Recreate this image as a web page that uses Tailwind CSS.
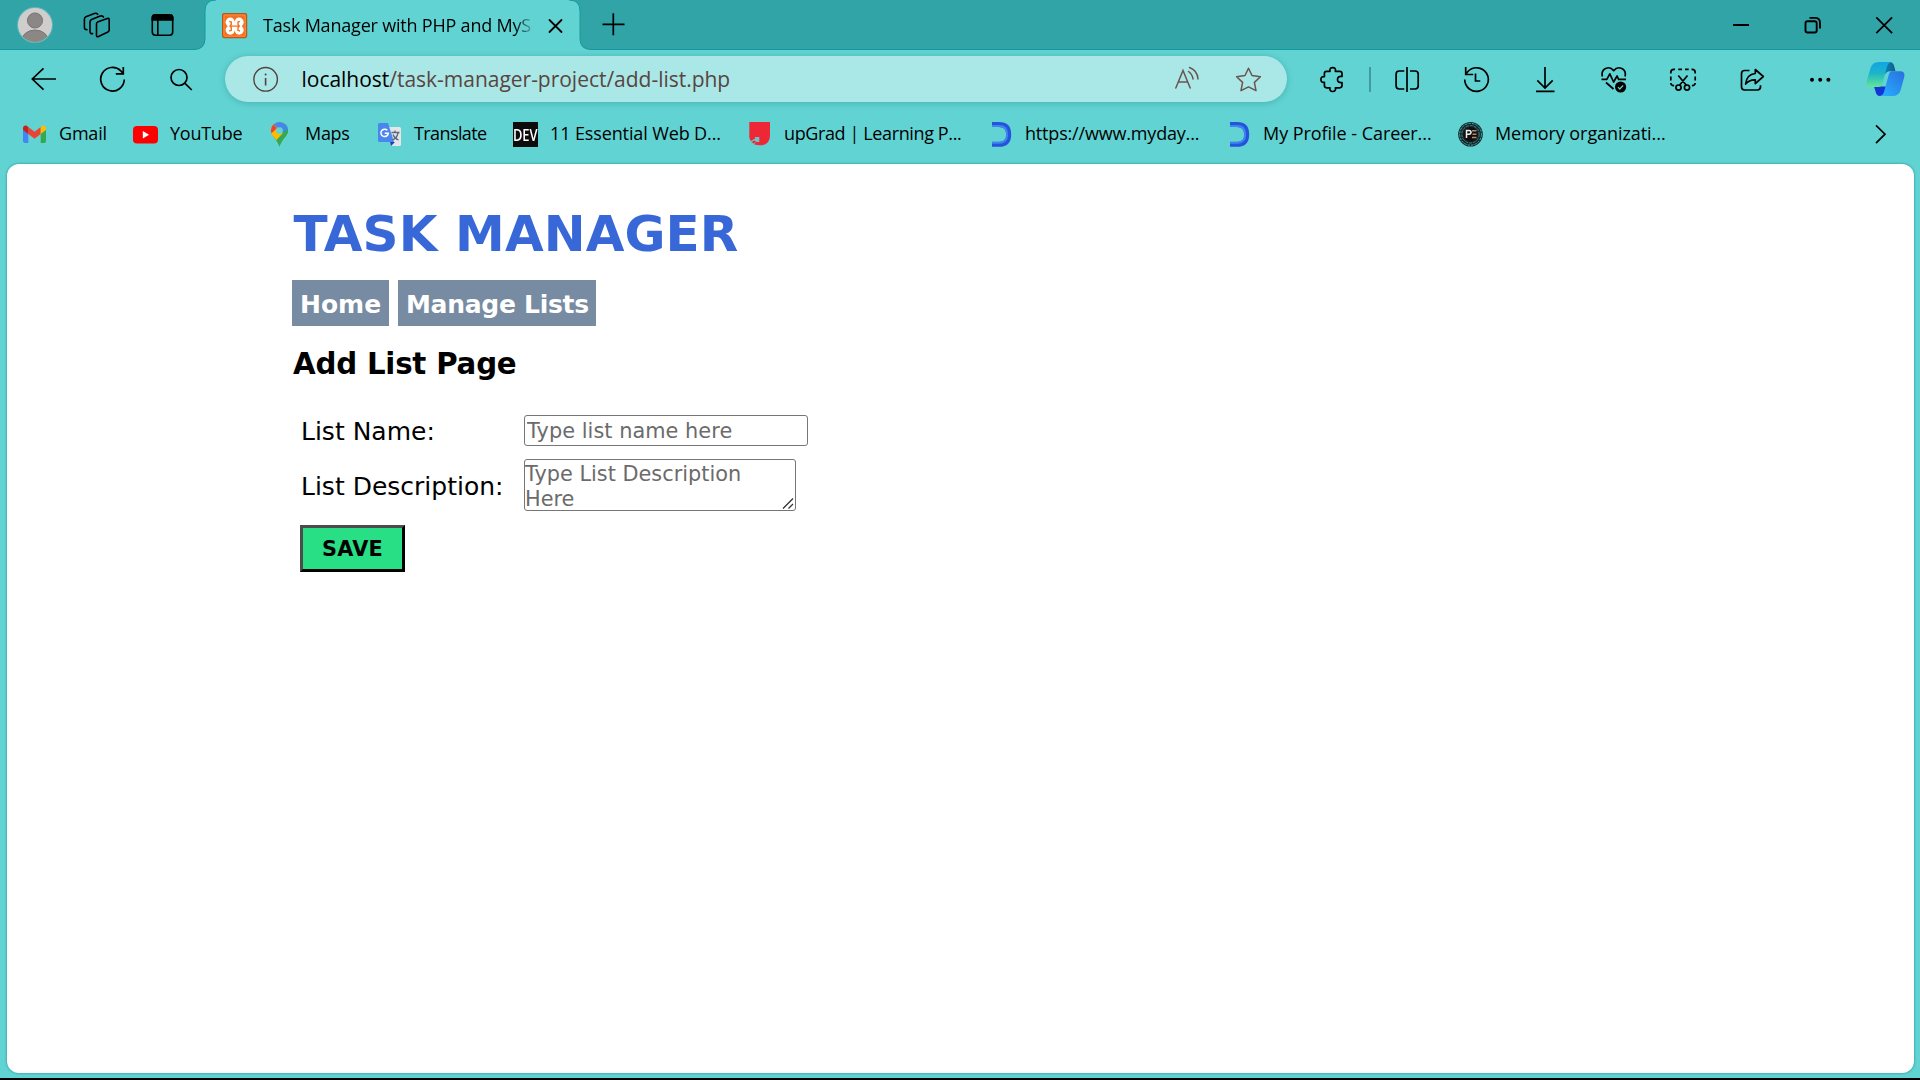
<!DOCTYPE html>
<html lang="en">
<head>
<meta charset="utf-8">
<title>Task Manager with PHP and MySQL</title>
<script src="https://cdn.jsdelivr.net/npm/@tailwindcss/browser@4"></script>
</head>
<body class="flex h-[1080px] w-[1920px] flex-col overflow-hidden bg-[#62d3d3] font-['Open_Sans',sans-serif] text-black">

<!-- Tab strip -->
<header class="flex h-[50px] shrink-0 items-start border-b border-[#149a9c] bg-[#31a4a8]">
  <svg class="ml-4 h-[50px] w-[38px]" viewBox="16 0 38 50">
    <defs><clipPath id="av"><circle cx="35" cy="25" r="17"/></clipPath></defs>
    <circle cx="35" cy="25" r="18" fill="#5fb8b8"/><circle cx="35" cy="25" r="17" fill="#d0cecd"/>
    <g clip-path="url(#av)" fill="#8b8785" stroke="#6d6a68" stroke-width=".8"><circle cx="35" cy="20.5" r="7.6"/><ellipse cx="35" cy="41" rx="13.5" ry="11"/></g>
  </svg>
  <svg class="ml-7 h-[50px] w-[30px]" viewBox="82 0 30 50" fill="none" stroke="#000" stroke-width="1.6" stroke-linejoin="round" stroke-linecap="round">
    <path d="M97.5 22.1l9.8-3.6q1.9-.6 1.9 1.3v10q0 1.5-1.3 2.2l-9.4 4.5q-2 .8-2-1.3V24q0-1.4 1-1.9z"/>
    <path d="M92.6 33.6q-2.6.3-2.6-2V22q0-1.8 1.6-2.5l8.6-3.4q2.3-.8 3.3.9"/>
    <path d="M87 29.8q-2.6-.2-2.6-2.6V19q0-1.700 1.500-2.300l8.500-3.200q2.200-.7 3.200.8"/>
  </svg>
  <svg class="ml-9 h-[50px] w-[28px]" viewBox="148 0 28 50" fill="none" stroke="#000" stroke-width="1.6">
    <rect x="152.3" y="14.800" width="20.400" height="20.400" rx="3.200"/><path d="M152.300 20v-2q0-3.200 3.200-3.200h14q3.200 0 3.200 3.200v2z" fill="#000"/><path d="M157.800 20v15"/>
  </svg>
  <div class="relative ml-[29px] flex h-[51px] w-[375px] items-center">
    <svg class="absolute top-0 -left-[11px] h-[51px] w-[397px]" viewBox="194 0 397 51"><path d="M194 49.500q11 0 11-11V11q0-11 11-11H569q11 0 11 11v27.500q0 11 11 11V51H194z" fill="#62d3d3"/><path d="M194 49.500q11 0 11-11V11q0-11 11-11M569 0q11 0 11 11v27.500q0 11 11 11" fill="none" stroke="#149a9c"/></svg>
    <svg class="relative ml-[17px] h-[26px] w-[26px]" viewBox="222 13 26 26">
      <rect x="222.600" y="13.600" width="24" height="24" rx="1.500" fill="#f37021" stroke="#b9561c" stroke-width="1.200"/>
      <rect x="224" y="15" width="21.200" height="21.200" rx="1" fill="none" stroke="#ff9448" stroke-width=".8"/>
      <g fill="#fff"><circle cx="230.300" cy="22.300" r="4.700"/><circle cx="239" cy="22.300" r="4.700"/><circle cx="230.300" cy="30" r="4.700"/><circle cx="239" cy="30" r="4.700"/><rect x="230.500" y="22.500" width="8.500" height="7.500"/></g>
      <path d="M233 16.500h3.300l-1.600 5zM233 35.700h3.300l-1.600-5z" fill="#f37021"/>
      <path d="M229.300 21.300l2 .7v2.500l-1.300 1.600 1.300 1.700v2.500l-2 .7M240 21.300l-2 .7v2.500l1.300 1.600-1.300 1.700v2.500l2 .7M231 26.100h7.500" fill="none" stroke="#f37021" stroke-width="1.400"/>
    </svg>
    <div class="relative mb-[2px] ml-[15px] w-[273px] overflow-hidden bg-linear-to-r from-black from-92% to-transparent bg-clip-text text-lg leading-7 tracking-[-0.2px] whitespace-nowrap text-transparent">Task Manager with PHP and MyS</div>
    <svg class="relative ml-[11px] h-[18px] w-[18px]" viewBox="547 17 18 18" stroke="#000" stroke-width="1.800" stroke-linecap="round"><path d="M549.500 20l12 12M561.500 20l-12 12"/></svg>
  </div>
  <svg class="ml-5 h-[50px] w-[26px]" viewBox="600 0 26 50" stroke="#000" stroke-width="1.700"><path d="M602.500 24.300h22M613.300 13.300v22"/></svg>
  <div class="ml-auto flex pr-[26px]">
    <svg class="h-[50px] w-[18px]" viewBox="1732 0 18 50" stroke="#000" stroke-width="2"><path d="M1733 25h16"/></svg>
    <svg class="ml-[53px] h-[50px] w-[22px]" viewBox="1803 0 22 50" fill="none" stroke="#000" stroke-width="1.900"><rect x="1805.500" y="21.300" width="11.200" height="11.200" rx="2"/><path d="M1809.500 17.900h5.500q5 0 5 5v5.500"/></svg>
    <svg class="ml-[49px] h-[50px] w-5" viewBox="1874 0 20 50" stroke="#000" stroke-width="1.800"><path d="M1876.300 17.300l15.800 15.800M1892.100 17.300l-15.800 15.800"/></svg>
  </div>
</header>

<!-- Toolbar -->
<nav class="flex h-[58px] shrink-0 items-center pl-[9px]">
  <div class="flex w-[69px] justify-center"><svg class="h-7 w-[29px]" viewBox="29 65 29 28" fill="none" stroke="#000" stroke-width="1.700"><path d="M56 79H32M43.500 68.300L32.300 79l11.200 10.700"/></svg></div>
  <div class="flex w-[69px] justify-center"><svg class="h-7 w-[29px]" viewBox="98 65 29 28" fill="none" stroke="#000" stroke-width="1.700"><path d="M124.300 79.500a11.800 11.800 0 1 1-3.500-8.700l2.200 2.700M123.300 67v6.800h-7.500"/></svg></div>
  <div class="flex w-[69px] justify-center"><svg class="h-7 w-[29px]" viewBox="167 65 29 28" fill="none" stroke="#000" stroke-width="1.700"><circle cx="179" cy="77.500" r="8"/><path d="M185 83.300l6.800 6.700"/></svg></div>

  <div class="ml-[9px] flex h-[46px] w-[1062px] items-center rounded-full bg-[#a9e8e6] pr-[25px] pl-[26px] shadow-[0_1px_7px_rgba(0,90,95,0.28)]">
    <svg class="h-7 w-[29px]" viewBox="251 65 29 28" fill="none" stroke="#51413f" stroke-width="1.400"><circle cx="265.600" cy="79.300" r="11.800"/><path d="M265.600 78v7.500" stroke-width="1.600"/><circle cx="265.600" cy="74.500" r="1" fill="#51413f" stroke="none"/></svg>
    <div class="ml-[21.500px] text-[21px] leading-7 tracking-[-0.02px] whitespace-nowrap text-[#5a4442]"><span class="text-black">localhost</span>/task-manager-project/add-list.php</div>
    <svg class="ml-auto h-7 w-7" viewBox="1173 65 28 28" fill="none" stroke="#6b5451" stroke-width="1.500" stroke-linecap="round"><path d="M1175.800 88l7.200-17.500L1190.200 88M1178.300 82h9.400M1188.500 71.500a11 11 0 0 1 4.500 7.500M1189.500 67.500a13 13 0 0 1 8.500 11.500"/></svg>
    <svg class="ml-[33px] h-7 w-7" viewBox="1234 65 28 28" fill="none" stroke="#6b5451" stroke-width="1.500" stroke-linejoin="round"><path d="M1248.500 68.200l3.500 7.300 8.400 1.200-6 5.700 1.600 8.300-7.500-3.900-7.500 3.900 1.600-8.300-6-5.700 8.400-1.200z"/></svg>
  </div>

  <div class="ml-[11px] flex w-[69px] justify-center"><svg class="h-7 w-[29px]" viewBox="1318 65 29 28" fill="none" stroke="#000" stroke-width="1.700" stroke-linejoin="round"><path d="M1326.500 71.300h3.500q-.7-3.700 2.700-3.700t2.700 3.700h4.300q2.300 0 2.300 2.300v2.900q-4.500-.5-4.500 3t4.500 3.100v3q0 2.200-2.300 2.200h-4.300q.7 3.700-2.700 3.700t-2.700-3.700h-3.500q-2.100 0-2.100-2.200v-3.200q-3.500.5-3.500-2.900t3.500-2.900v-3.100q0-2.200 2.100-2.200z"/></svg></div>
  <div class="mx-[2px] h-[25px] w-[2px] bg-[#449a9a]"></div>
  <div class="flex w-[69px] justify-center"><svg class="h-7 w-[29px]" viewBox="1393 65 29 28" fill="none" stroke="#000" stroke-width="1.700"><path d="M1404.300 71h-5q-3.200 0-3.200 3.200v11.600q0 3.200 3.200 3.200h5M1410 71h5q3.200 0 3.200 3.200v11.600q0 3.200-3.200 3.200h-5M1407 67v25"/></svg></div>
  <div class="flex w-[69px] justify-center"><svg class="h-7 w-[29px]" viewBox="1462 65 29 28" fill="none" stroke="#000" stroke-width="1.700"><path d="M1464.700 79.500a11.800 11.800 0 1 0 3-7.800l-2 2.600M1465.700 67v7.500h7.500M1475.500 73.500v7.500h4.800"/></svg></div>
  <div class="flex w-[69px] justify-center"><svg class="h-7 w-[29px]" viewBox="1531 65 29 28" fill="none" stroke="#000" stroke-width="1.700"><path d="M1545 67v21M1537.300 80.300l7.700 7.700 7.700-7.700M1536 91.300h18.500"/></svg></div>
  <div class="flex w-[69px] justify-center"><svg class="h-7 w-[29px]" viewBox="1600 66 29 28" fill="none" stroke="#000" stroke-width="1.700" stroke-linejoin="round"><path d="M1602.400 77.500c-2-8 7-11.500 11.300-5.800 4.300-5.700 13.300-2.200 11.300 5.800M1601.500 80.300h5.300l3-5.500 3.800 8.200 3.500-6 1.500 3.300h7.400M1606 83.500l7.500 6.500"/><circle cx="1620.600" cy="88" r="5.600" fill="#000" stroke="none"/><path d="M1618 88.200l1.800 1.800 3.300-3.500" stroke="#62d3d3" stroke-width="1.200"/></svg></div>
  <div class="flex w-[69px] justify-center"><svg class="h-7 w-[29px]" viewBox="1669 65 29 28" fill="none" stroke="#000" stroke-width="1.700"><path d="M1670.800 73.500v-1q0-3.200 3.200-3.200h1M1678.300 69.300h3.700M1685 69.300h3.700M1691.500 69.300h.5q3.200 0 3.200 3.200v1M1670.800 76.500v4M1695.200 76.500v4M1670.800 83q.2 2.700 3.300 2.700M1695.200 83q-.2 2.700-3.300 2.700M1678.300 75.500l8 9.800M1687.500 75.500l-8 9.800"/><circle cx="1678.500" cy="87.600" r="2.600"/><circle cx="1687" cy="87.600" r="2.600"/></svg></div>
  <div class="flex w-[69px] justify-center"><svg class="h-7 w-[29px]" viewBox="1738 65 29 28" fill="none" stroke="#000" stroke-width="1.700" stroke-linejoin="round"><path d="M1749.500 70.500h-4.800q-3.200 0-3.200 3.200v13.100q0 3.200 3.200 3.200h12.600q3.200 0 3.200-3.200v-1.500"/><path d="M1755.300 69.500l8 7-8 7.200v-3.900q-6-.3-9.700 4.200 1-9.600 9.700-10.500z"/></svg></div>
  <div class="flex w-[69px] justify-center"><svg class="h-7 w-[29px]" viewBox="1807 65 29 28"><circle cx="1812" cy="79.700" r="2"/><circle cx="1820.200" cy="79.700" r="2"/><circle cx="1828.400" cy="79.700" r="2"/></svg></div>
  <div class="flex w-[60px] justify-center">
    <svg class="h-9 w-10" viewBox="1866.500 62 40 36">
      <defs>
        <linearGradient id="ca" x1="0" y1="0" x2="0" y2="1"><stop offset="0" stop-color="#12a4e6"/><stop offset=".45" stop-color="#1cb5c9"/><stop offset="1" stop-color="#63e592"/></linearGradient>
        <linearGradient id="cb" x1="1" y1="0" x2="0" y2="1"><stop offset="0" stop-color="#2a6ddf"/><stop offset="1" stop-color="#27b3ff"/></linearGradient>
        <linearGradient id="cc" x1="0" y1="0" x2="1" y2="0"><stop offset="0" stop-color="#0a86c2"/><stop offset="1" stop-color="#125e86"/></linearGradient>
      </defs>
      <path d="M1886 63h4q3.500 0 4.500 3.500l1.500 5.700h-5.500q-3.500 0-4.500 3l-2-6z" fill="url(#cc)"/>
      <path d="M1874.500 87.500h12l-1.500 5.500q-1 4-4.500 4t-4.300-4z" fill="#1436d6"/>
      <path d="M1879.500 63h11.500q-2.500 1-3.500 4.500l-4.300 16.300q-1 4.200-4.700 4.200h-7q-5.500 0-4.300-5.500l3.800-13.500q1.800-6 8.500-6z" fill="url(#ca)"/>
      <path d="M1892.500 72.200h8q5.500 0 4.300 5.500l-3.600 13.300q-1.800 6-8.200 6h-12.500q3-.5 4.200-4.500l4.300-16q1-4.300 3.500-4.300z" fill="url(#cb)"/>
    </svg>
  </div>
</nav>

<!-- Bookmarks bar -->
<nav class="flex h-[52px] shrink-0 items-center pl-[22px] text-lg leading-7 whitespace-nowrap">
  <div class="flex w-[111px] items-center gap-3">
    <svg class="h-7 w-[25px]" viewBox="22 120 25 28"><path d="M23 129v12q0 2 2 2h3.300v-13z" fill="#4285f4"/><path d="M40.700 130v13H44q2 0 2-2v-12z" fill="#34a853"/><path d="M28.300 127v7l6.200 4.700 6.200-4.700v-7l-6.200 4.700z" fill="#ea4335"/><path d="M40.700 127v7l5.300-4v-1.500q0-2.800-2.500-2.900-1 0-2.800 1.400z" fill="#fbbc04"/><path d="M23 128.500v1.500l5.300 4v-7q-1.700-1.400-2.700-1.400-2.600.1-2.600 2.900z" fill="#c5221f"/></svg>
    <span class="mb-[2px] tracking-[-0.2px]">Gmail</span>
  </div>
  <div class="flex w-[135px] items-center gap-3">
    <svg class="h-7 w-[25px]" viewBox="133 120 25 28"><rect x="133" y="126" width="25" height="17.500" rx="4" fill="#f00"/><path d="M142.800 131v7.600l6.300-3.800z" fill="#fff"/></svg>
    <span class="mb-[2px] tracking-[-0.25px]">YouTube</span>
  </div>
  <div class="flex w-[109px] items-center gap-3">
    <svg class="h-7 w-[25px]" viewBox="268 120 25 28">
      <defs><clipPath id="pin"><path d="M279.500 122a8.600 8.600 0 0 1 8.600 8.700c0 5-6.600 8.300-8.600 16-2-7.700-8.600-11-8.600-16a8.600 8.600 0 0 1 8.600-8.700z"/></clipPath></defs>
      <g clip-path="url(#pin)"><path d="M268 120h25v28h-25z" fill="#34a853"/><path d="M270 140l18-20h-18z" fill="#fbbc04"/><path d="M270 126l9 5-9 9z" fill="#fbbc04"/><path d="M268 124.500l4-1.500 5 5-8 8z" fill="#ea4335"/><path d="M272 123l7.500-3 6 3.500-6 6z" fill="#4285f4"/><path d="M285.500 123.500l-6 7 10 2v-9z" fill="#4285f4"/><path d="M270 138l12-4 8-7v6l-11 14h-9z" fill="#34a853"/><path d="M270 133.500l4-1.500 9 1-7.500 8z" fill="#fbbc04"/></g><circle cx="279.500" cy="130.600" r="3.400" fill="#62d3d3"/>
    </svg>
    <span class="mb-[2px] tracking-[-0.3px]">Maps</span>
  </div>
  <div class="flex w-[136px] items-center gap-3">
    <svg class="h-7 w-[25px]" viewBox="377 120 25 28"><path d="M386 127h13.500q1.500 0 1.500 1.500v16q0 1.500-1.500 1.500H391z" fill="#e3e5e8"/><path d="M390 142h5l-4 4z" fill="#1a3fb5"/><path d="M379.500 123H388l6 19h-14.500q-1.500 0-1.500-1.500v-16q0-1.500 1.500-1.500z" fill="#4a86ee"/><path d="M387.300 130.300a3.700 3.700 0 1 0 1 3h-3.600" fill="none" stroke="#fff" stroke-width="1.500"/><path d="M391.500 132.500h8M395 130.500v2M398 133q-1 5-5.500 7M393 134.500q1.500 4 5.500 5.500" fill="none" stroke="#5b6b78" stroke-width="1.300"/></svg>
    <span class="mb-[2px] tracking-[-0.6px]">Translate</span>
  </div>
  <div class="flex w-[234px] items-center gap-3">
    <div class="flex h-[25px] w-[25px] items-center justify-center bg-[#0c0c0c]"><span class="scale-x-[0.76] text-[17px] leading-none font-semibold text-white">DEV</span></div>
    <span class="mb-[2px] tracking-[-0.12px]">11 Essential Web D...</span>
  </div>
  <div class="flex w-[240px] items-center gap-3">
    <svg class="h-7 w-[25px]" viewBox="747 120 25 28"><path d="M749.300 122H770v13.500q0 9.800-10.300 9.800t-10.400-9.800z" fill="#ee2737"/><path d="M749.300 137h10v5h-3.500q-1 3-3.500 1.500-3-2.500-3-6.500z" fill="#62d3d3" opacity=".9"/><path d="M749.300 136h5.700v2.500l-4 2.500q-1.700-2-1.700-5zM751.500 142l3-1.500 1.500 1-2 2z" fill="#ee2737"/></svg>
    <span class="mb-[2px] tracking-[-0.38px]">upGrad | Learning P...</span>
  </div>
  <div class="flex w-[238px] items-center gap-[13px]">
    <svg class="h-7 w-[25px]" viewBox="987 120 25 28" fill="none"><path d="M992 124.500h7q9.700 0 9.700 9.900t-9.700 9.900h-7" stroke="#2553dc" stroke-width="5"/><path d="M992 126h7q8.200 0 8.200 8.400t-8.200 8.400h-7" stroke="#3f85f0" stroke-width="1.800"/></svg>
    <span class="mb-[2px] tracking-[-0.18px]">https://www.myday...</span>
  </div>
  <div class="flex w-[233px] items-center gap-[13px]">
    <svg class="h-7 w-[25px]" viewBox="1224 120 25 28" fill="none"><path d="M1229 124.500h7q9.700 0 9.700 9.900t-9.700 9.900h-7" stroke="#2553dc" stroke-width="5"/><path d="M1229 126h7q8.200 0 8.200 8.400t-8.200 8.400h-7" stroke="#3f85f0" stroke-width="1.800"/></svg>
    <span class="mb-[2px] tracking-[-0.05px]">My Profile - Career...</span>
  </div>
  <div class="flex items-center gap-3">
    <svg class="h-7 w-[25px]" viewBox="1458 120 25 28" fill="none"><circle cx="1470.500" cy="134.300" r="12.300" fill="#12292b"/><circle cx="1470.500" cy="134.300" r="10.900" stroke="#57b3b4" stroke-width=".9" stroke-dasharray="2.500 1"/><circle cx="1470.500" cy="134.300" r="8.700" stroke="#4b9899" stroke-width=".8" stroke-dasharray="3 1"/><circle cx="1470.500" cy="134.300" r="7.200" fill="#140f0e"/><path d="M1466.500 138v-7.500h2.500q2 0 2 1.800t-2 1.900h-1.800" stroke="#eee" stroke-width="1.500"/><path d="M1472 130.800h4.500M1472.500 134.200h4M1472 137.500h4.500" stroke="#a98e70" stroke-width="1.400"/></svg>
    <span class="mb-[2px] tracking-[-0.07px]">Memory organizati...</span>
  </div>
  <svg class="mr-[32px] ml-auto h-7 w-[14px]" viewBox="1874 120 14 28" fill="none" stroke="#000" stroke-width="1.700"><path d="M1876 125.300l9 8.900-9 8.900"/></svg>
</nav>

<!-- Page -->
<main class="mx-[7px] mt-[4px] h-[909px] w-[1907px] shrink-0 rounded-xl bg-white px-[285px] pt-[41px] font-['Verdana','DejaVu_Sans',sans-serif] text-[25px] shadow-[0_0_2px_1px_rgba(20,130,135,0.4)]">
  <h1 class="pl-[1.5px] text-[50px] leading-[58px] font-bold tracking-[0.1px] whitespace-nowrap text-[#3868d8]">TASK MANAGER</h1>
  <div class="mt-[17px] flex gap-[9px] font-bold text-white">
    <a class="h-[46px] w-[97px] bg-[#778ba2] pl-2 leading-[49px]">Home</a>
    <a class="h-[46px] w-[198px] bg-[#778ba2] pl-2 leading-[49px] tracking-[-0.28px] whitespace-nowrap">Manage Lists</a>
  </div>
  <h3 class="mt-[21px] pl-px text-[29.25px] leading-[34px] font-bold tracking-[-0.2px]">Add List Page</h3>
  <form class="mt-[34px]">
    <div class="flex h-[31px] items-center pl-[9px]"><label class="w-[223px] pt-[2px] leading-[30px]">List Name:</label><input type="text" placeholder="Type list name here" class="h-[31px] w-[284px] rounded-[3px] border border-[#767676] px-[2px] pt-[3px] text-[20.83px] tracking-[0.05px] placeholder:text-[#6b6b6b]"></div>
    <div class="mt-[13px] flex h-[52px] items-center pl-[9px]">
      <label class="w-[223px] pt-[3px] leading-[30px] whitespace-nowrap">List Description:</label>
      <div class="relative h-[52px] w-[272px]">
        <textarea placeholder="Type List Description Here" class="block h-[52px] w-[272px] resize-none overflow-hidden rounded-[3px] border border-[#767676] pt-[1.500px] text-[20.83px] leading-[25px] placeholder:text-[#6b6b6b]"></textarea>
        <svg class="absolute right-[2px] bottom-[2px] h-3 w-3" viewBox="0 0 12 12" stroke="#333" stroke-width="1.300"><path d="M1 11.500L11 1.500M6.500 11.500l4.500-4.500"/></svg>
      </div>
    </div>
    <button type="button" class="mt-[14px] ml-2 block h-[47px] w-[105px] border-[3px] border-t-[#4c4c4c] border-r-black border-b-black border-l-[#4c4c4c] bg-[#28df85] pt-[2px] text-[20.83px] leading-none font-bold tracking-[0.2px]">SAVE</button>
  </form>
</main>
<footer class="mt-auto h-[2px] shrink-0 bg-black"></footer>
</body>
</html>
